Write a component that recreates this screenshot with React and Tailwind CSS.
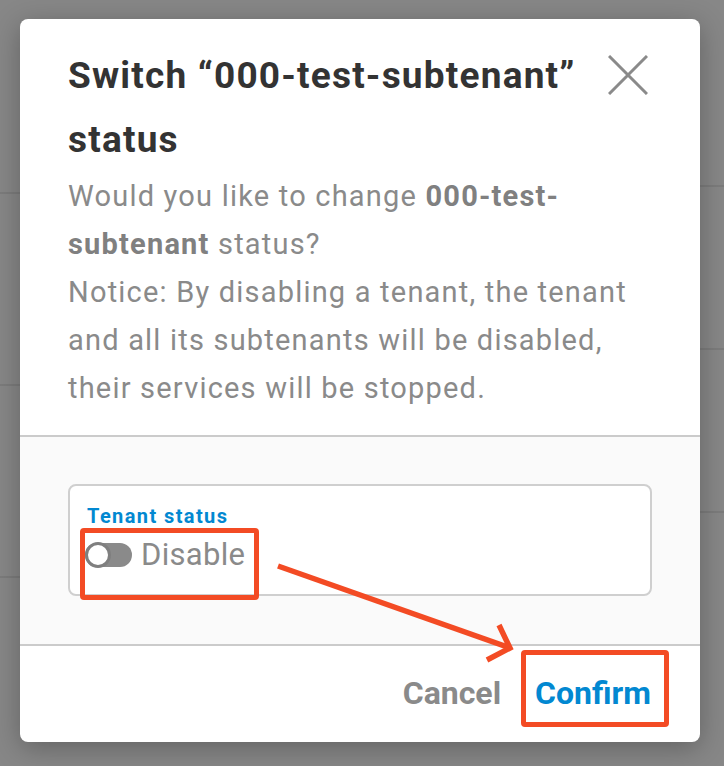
import React from "react";

export default function App() {
  return (
    <div
      className="relative w-[724px] h-[766px] overflow-hidden bg-[#878787]"
      style={{ fontFamily: "Roboto, 'Noto Sans', sans-serif" }}
    >
      {/* dimmed page behind the modal */}
      <div className="flex justify-between h-full">
        <div className="flex flex-col w-[360px]">
          <div className="h-[194px] border-b-2 border-[#7c7c7c]" />
          <div className="h-[192px] border-b-2 border-[#7c7c7c]" />
          <div className="h-[192px] border-b-2 border-[#7c7c7c]" />
        </div>
        <div className="flex flex-col w-[360px]">
          <div className="h-[187px] border-b-2 border-[#7c7c7c]" />
          <div className="h-[163px] border-b-2 border-[#7c7c7c]" />
          <div className="h-[163px] border-b-2 border-[#7c7c7c]" />
        </div>
      </div>

      {/* modal */}
      <div className="absolute left-[20px] top-[19px] w-[680px] h-[723px] rounded-[8px] bg-white flex flex-col overflow-hidden shadow-[0_6px_28px_rgba(0,0,0,0.28)]">
        <div className="pl-[48px] pr-[52px] pt-[25px] pb-[23px]">
          <div className="flex items-start justify-between">
            <h2 className="w-[530px] text-[37px] leading-[64px] font-bold text-[#333333] tracking-[1.2px]">
              Switch “000-test-subtenant” status
            </h2>
            <button className="mt-[11px] w-[40px] h-[40px] flex items-center justify-center">
              <svg width="40" height="40" viewBox="0 0 40 40">
                <path d="M1 1 L39 39 M39 1 L1 39" stroke="#8a8a8a" strokeWidth="3" fill="none" />
              </svg>
            </button>
          </div>
          <p className="w-[572px] text-[29px] leading-[48px] text-[#8a8a8a] tracking-[1.2px]">
            Would you like to change <span className="font-bold text-[#808080]">000-test-subtenant</span> status?
            <br />
            Notice: By disabling a tenant, the tenant and all its subtenants will be disabled, their services will be stopped.
          </p>
        </div>

        <div className="border-t-2 border-[#cbcbcb] bg-[#fafafa] px-[48px] pt-[47px] pb-[48px] flex-none">
          <div className="h-[112px] rounded-[8px] border-2 border-[#cfcfcf] bg-white pl-[15px] pt-[18px]">
            <div className="ml-[2px] text-[20px] leading-[24px] font-bold text-[#0288d1] tracking-[1.4px]">Tenant status</div>
            <div className="flex items-center gap-[9px] mt-[7px]">
              <div className="w-[47px] h-[24px] rounded-full bg-[#8a8a8a] flex items-center">
                <div className="w-[26px] h-[26px] rounded-full bg-white border-[3px] border-[#7f7f7f]" />
              </div>
              <span className="text-[31px] leading-[40px] text-[#8a8a8a] tracking-[0.3px]">Disable</span>
            </div>
          </div>
        </div>

        <div className="flex-1 border-t-2 border-[#cbcbcb] flex items-center justify-end gap-[34px] pr-[49px] pb-[2px]">
          <button className="text-[32px] leading-[40px] font-bold text-[#8a8a8a]">Cancel</button>
          <button className="text-[32px] leading-[40px] font-bold text-[#0288d1]">Confirm</button>
        </div>
      </div>

      {/* annotations */}
      <div className="absolute left-[80px] top-[528px] w-[179px] h-[72px] border-[5px] border-[#f34b24] rounded-[4px]" />
      <div className="absolute left-[521px] top-[650px] w-[148px] h-[77px] border-[5px] border-[#f34b24] rounded-[4px]" />
      <svg className="absolute left-0 top-0" width="724" height="766" viewBox="0 0 724 766">
        <path d="M278 566 L510 648" stroke="#f34b24" strokeWidth="5.5" fill="none" />
        <path d="M499 625 L510 648 L487 660" stroke="#f34b24" strokeWidth="5.5" fill="none" />
      </svg>
    </div>
  );
}
